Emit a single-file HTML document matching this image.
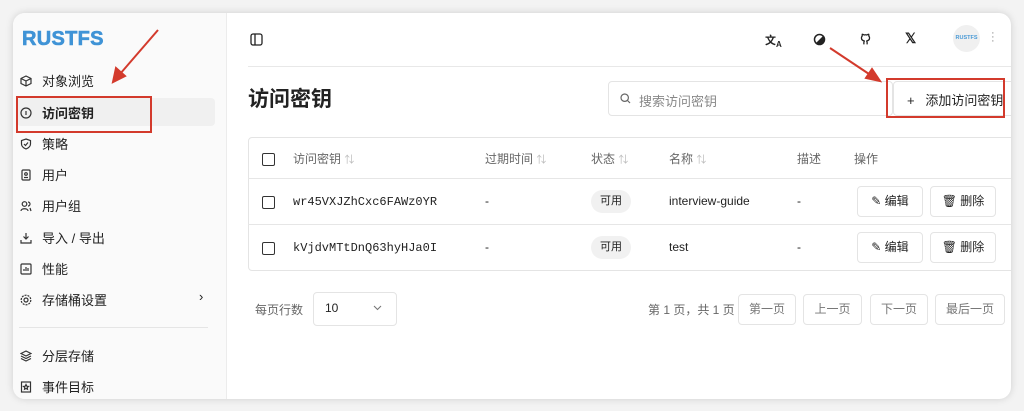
<!DOCTYPE html>
<html><head><meta charset="utf-8"><style>
*{box-sizing:border-box;margin:0;padding:0}
body{width:1024px;height:411px;background:#f3f3f3;font-family:"Liberation Sans","Noto Sans CJK SC",sans-serif;position:relative;overflow:hidden;color:#222}
.win{position:absolute;left:13px;top:13px;width:998px;height:386px;background:#fff;border-radius:12px;overflow:hidden;box-shadow:0 0 8px rgba(0,0,0,.15)}
.side{position:absolute;left:0;top:0;width:214px;height:386px;background:#fafafa;border-right:1px solid #ececec}
.abs{position:absolute}
.logo{left:9px;top:15px;font-size:20px;font-weight:bold;color:#3f93d6;letter-spacing:.3px;-webkit-text-stroke:.6px #3f93d6}
.mi{position:absolute;left:29px;font-size:13px;color:#222}
.ic{position:absolute;left:7px;width:12px;height:12px}
.t{font-size:12px;color:#666}
.b{position:absolute;border:1px solid #e4e4e4;border-radius:4px;background:#fff}
.red{position:absolute;border:2px solid #d33a2c}
.cb{position:absolute;width:13px;height:13px;border:1.3px solid #333;border-radius:2px}
.mono{font-family:"Liberation Mono",monospace;font-size:12px}
</style></head><body>
<div class="win">
<div class="side">
<div class="abs logo">RUSTFS</div>
<div class="abs" style="left:4px;top:85px;width:198px;height:28px;background:#f0f0f0;border-radius:4px"></div>
<svg class="ic" style="top:62px" viewBox="0 0 12 12" fill="none" stroke="#333" stroke-width="1.2"><path d="M6 1L11 3.5V8.5L6 11L1 8.5V3.5Z M1 3.5L6 6L11 3.5 M6 6V11"/></svg>
<div class="mi" style="top:58px">对象浏览</div>
<svg class="ic" style="top:94px" viewBox="0 0 12 12" fill="none" stroke="#333" stroke-width="1.2"><circle cx="6" cy="6" r="5"/><path d="M6 4V8"/></svg>
<div class="mi" style="top:90px;font-weight:bold">访问密钥</div>
<svg class="ic" style="top:125px" viewBox="0 0 12 12" fill="none" stroke="#333" stroke-width="1.2"><path d="M6 1L10.5 2.5V6C10.5 8.5 8.5 10 6 11C3.5 10 1.5 8.5 1.5 6V2.5Z M4 6L5.5 7.5L8 4.5"/></svg>
<div class="mi" style="top:121px">策略</div>
<svg class="ic" style="top:156px" viewBox="0 0 12 12" fill="none" stroke="#333" stroke-width="1.2"><rect x="2" y="1" width="8" height="10" rx="1"/><circle cx="6" cy="5" r="1.3"/><path d="M4 8.5H8"/></svg>
<div class="mi" style="top:152px">用户</div>
<svg class="ic" style="top:187px" viewBox="0 0 12 12" fill="none" stroke="#333" stroke-width="1.2"><circle cx="4.5" cy="4" r="2.3"/><path d="M1 11C1 8 8 8 8 11 M8 2A2 2 0 0 1 8 6 M10 8L11 11"/></svg>
<div class="mi" style="top:183px">用户组</div>
<svg class="ic" style="top:219px" viewBox="0 0 12 12" fill="none" stroke="#333" stroke-width="1.2"><path d="M6 1V7 M3.5 4.5L6 7L8.5 4.5 M1 8V11H11V8"/></svg>
<div class="mi" style="top:215px">导入 / 导出</div>
<svg class="ic" style="top:250px" viewBox="0 0 12 12" fill="none" stroke="#333" stroke-width="1.2"><rect x="1" y="1" width="10" height="10" rx="1"/><path d="M4 8V6 M6 8V4 M8 8V5"/></svg>
<div class="mi" style="top:246px">性能</div>
<svg class="ic" style="top:281px" viewBox="0 0 12 12" fill="none" stroke="#333" stroke-width="1.2"><circle cx="6" cy="6" r="2"/><circle cx="6" cy="6" r="4.8" stroke-dasharray="2 1"/></svg>
<div class="mi" style="top:277px">存储桶设置</div>
<div class="abs" style="left:186px;top:276px;font-size:13px">›</div>
<div class="abs" style="left:6px;top:314px;width:189px;height:1px;background:#e5e5e5"></div>
<svg class="ic" style="top:337px" viewBox="0 0 12 12" fill="none" stroke="#333" stroke-width="1.2"><path d="M6 1L11 3.5L6 6L1 3.5Z M1 6L6 8.5L11 6 M1 8.5L6 11L11 8.5"/></svg>
<div class="mi" style="top:333px">分层存储</div>
<svg class="ic" style="top:368px" viewBox="0 0 12 12" fill="none" stroke="#333" stroke-width="1.2"><rect x="1.5" y="1" width="9" height="10"/><path d="M6 3.5L6.8 5.2L8.5 5.4L7.2 6.6L7.5 8.3L6 7.5L4.5 8.3L4.8 6.6L3.5 5.4L5.2 5.2Z"/></svg>
<div class="mi" style="top:364px">事件目标</div>
</div>
<!-- header -->
<svg class="abs" style="left:237px;top:20px" width="13" height="13" viewBox="0 0 13 13" fill="none" stroke="#222" stroke-width="1.3"><rect x="1" y="1" width="11" height="11" rx="2"/><path d="M5 1V12"/></svg>
<div class="abs" style="left:752px;top:19px;font-size:11px;font-weight:bold">文<sub style="font-size:8px">A</sub></div>
<svg class="abs" style="left:800px;top:20px" width="13" height="13" viewBox="0 0 13 13"><circle cx="6.5" cy="6.5" r="5" fill="none" stroke="#222" stroke-width="1.5"/><path d="M6.5 6.5L10 3A5 5 0 0 1 6.5 11.5A5 5 0 0 1 3 10Z" fill="#222"/></svg>
<svg class="abs" style="left:846px;top:20px" width="13" height="13" viewBox="0 0 16 16" fill="none" stroke="#222" stroke-width="1.6"><path d="M6 14V11.5C6 10.5 6.5 10 7 9.8C4.5 9.5 3 8.5 3 6C3 5 3.4 4.2 4 3.6C3.8 3 3.8 2.2 4.1 1.5C5 1.5 5.8 2 6.3 2.4A7 7 0 0 1 9.7 2.4C10.2 2 11 1.5 11.9 1.5C12.2 2.2 12.2 3 12 3.6C12.6 4.2 13 5 13 6C13 8.5 11.5 9.5 9 9.8C9.5 10 10 10.5 10 11.5V14"/></svg>
<div class="abs" style="left:892px;top:17px;font-size:14px;font-weight:bold">𝕏</div>
<div class="abs" style="left:940px;top:12px;width:27px;height:27px;border-radius:50%;background:#f0f0f0;font-size:5.5px;font-weight:bold;color:#4a9ad6;text-align:center;line-height:27px">RUSTFS</div>
<div class="abs" style="left:978px;top:18px;font-size:11px;color:#888;line-height:4px">·<br>·<br>·</div>
<div class="abs" style="left:235px;top:53px;width:763px;height:1px;background:#e8e8e8"></div>
<div class="abs" style="left:235px;top:70px;font-size:21px;font-weight:bold">访问密钥</div>
<div class="b" style="left:595px;top:68px;width:285px;height:35px"></div>
<svg class="abs" style="left:607px;top:80px" width="11" height="11" viewBox="0 0 11 11" fill="none" stroke="#666" stroke-width="1.2"><circle cx="4.7" cy="4.7" r="3.7"/><path d="M7.5 7.5L10 10"/></svg>
<div class="abs t" style="left:626px;top:78px;font-size:13px;color:#888">搜索访问密钥</div>
<div class="b" style="left:880px;top:68px;width:130px;height:35px"></div>
<div class="abs" style="left:894px;top:77px;font-size:13px">+&nbsp;&nbsp; 添加访问密钥</div>
<!-- table -->
<div class="b" style="left:235px;top:124px;width:775px;height:134px;border-radius:4px"></div>
<div class="abs" style="left:235px;top:165px;width:763px;height:1px;background:#e6e6e6"></div>
<div class="abs" style="left:235px;top:211px;width:763px;height:1px;background:#e6e6e6"></div>
<div class="cb" style="left:249px;top:140px"></div>
<div class="abs t" style="left:280px;top:137px">访问密钥 <span style="color:#bbb;font-size:10px">⇅</span></div>
<div class="abs t" style="left:472px;top:137px">过期时间 <span style="color:#bbb;font-size:10px">⇅</span></div>
<div class="abs t" style="left:578px;top:137px">状态 <span style="color:#bbb;font-size:10px">⇅</span></div>
<div class="abs t" style="left:656px;top:137px">名称 <span style="color:#bbb;font-size:10px">⇅</span></div>
<div class="abs t" style="left:784px;top:137px">描述</div>
<div class="abs t" style="left:841px;top:137px">操作</div>

<div class="cb" style="left:249px;top:183px"></div>
<div class="abs mono" style="left:280px;top:182px">wr45VXJZhCxc6FAWz0YR</div>
<div class="abs" style="left:472px;top:181px;font-size:12px">-</div>
<div class="abs" style="left:578px;top:177px;width:40px;height:23px;border-radius:12px;background:#f1f1f1;font-size:11px;text-align:center;line-height:23px">可用</div>
<div class="abs" style="left:656px;top:181px;font-size:12px">interview-guide</div>
<div class="abs" style="left:784px;top:181px;font-size:12px">-</div>
<div class="b" style="left:844px;top:173px;width:66px;height:31px;font-size:12px;text-align:center;line-height:29px">✎ 编辑</div>
<div class="b" style="left:917px;top:173px;width:66px;height:31px;font-size:12px;text-align:center;line-height:29px">🗑 删除</div>

<div class="cb" style="left:249px;top:229px"></div>
<div class="abs mono" style="left:280px;top:228px">kVjdvMTtDnQ63hyHJa0I</div>
<div class="abs" style="left:472px;top:227px;font-size:12px">-</div>
<div class="abs" style="left:578px;top:223px;width:40px;height:23px;border-radius:12px;background:#f1f1f1;font-size:11px;text-align:center;line-height:23px">可用</div>
<div class="abs" style="left:656px;top:227px;font-size:12px">test</div>
<div class="abs" style="left:784px;top:227px;font-size:12px">-</div>
<div class="b" style="left:844px;top:219px;width:66px;height:31px;font-size:12px;text-align:center;line-height:29px">✎ 编辑</div>
<div class="b" style="left:917px;top:219px;width:66px;height:31px;font-size:12px;text-align:center;line-height:29px">🗑 删除</div>

<!-- pagination -->
<div class="abs t" style="left:242px;top:288px">每页行数</div>
<div class="b" style="left:300px;top:279px;width:84px;height:34px"></div>
<div class="abs" style="left:312px;top:288px;font-size:12px">10</div>
<svg class="abs" style="left:360px;top:292px" width="9" height="6" viewBox="0 0 9 6" fill="none" stroke="#777" stroke-width="1.1"><path d="M1 1L4.5 4.5L8 1"/></svg>
<div class="abs t" style="left:635px;top:288px">第 1 页，共 1 页</div>
<div class="b" style="left:725px;top:281px;width:58px;height:31px;font-size:12px;color:#777;text-align:center;line-height:29px">第一页</div>
<div class="b" style="left:790px;top:281px;width:59px;height:31px;font-size:12px;color:#777;text-align:center;line-height:29px">上一页</div>
<div class="b" style="left:857px;top:281px;width:58px;height:31px;font-size:12px;color:#777;text-align:center;line-height:29px">下一页</div>
<div class="b" style="left:922px;top:281px;width:70px;height:31px;font-size:12px;color:#777;text-align:center;line-height:29px">最后一页</div>
</div>
<!-- annotations -->
<div class="red" style="left:16px;top:96px;width:136px;height:37px"></div>
<div class="red" style="left:886px;top:78px;width:119px;height:40px"></div>
<svg class="abs" style="left:0;top:0" width="1024" height="411"><g stroke="#d33a2c" stroke-width="2" fill="#d33a2c"><line x1="158" y1="30" x2="120" y2="74"/><path d="M113 82L116 68L125 76Z"/><line x1="830" y1="48" x2="872" y2="76"/><path d="M880 81L866 78L872 69Z"/></g></svg>
</body></html>
